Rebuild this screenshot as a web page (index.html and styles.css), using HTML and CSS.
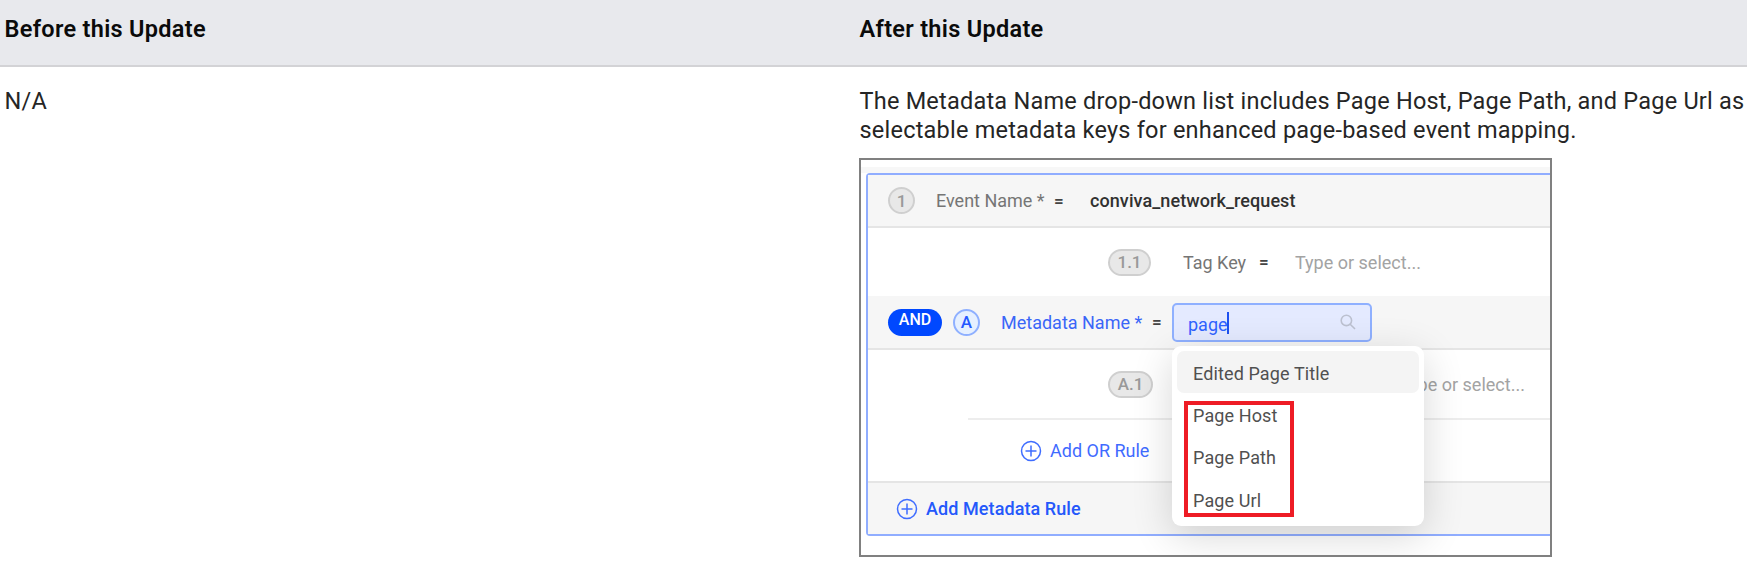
FILE: index.html
```html
<!DOCTYPE html>
<html lang="en">
<head>
  <meta charset="UTF-8" />
  <title>Metadata Name drop-down list</title>
  <meta name="viewport" content="width=device-width, initial-scale=1.0">
  <link rel="stylesheet" href="styles.css">
</head>
<body>
  <div class="table">
    <div class="table-head">
      <div class="cell"><span class="t">Before this Update</span></div>
      <div class="cell"><span class="t">After this Update</span></div>
    </div>
    <div class="table-row">
      <div class="cell"><p class="text">N/A</p></div>
      <div class="cell">
        <p class="text">The Metadata Name drop-down list includes Page Host, Page Path, and Page Url as<br>selectable metadata keys for enhanced page-based event mapping.</p>

        <div class="figure">
          <div class="strip"></div>
          <div class="rules">
            <div class="rule event">
              <span class="badge round">1</span>
              <span class="label event-label">Event Name *</span>
              <span class="equals">=</span>
              <span class="value">conviva_network_request</span>
            </div>

            <div class="rule tag">
              <span class="badge wide">1.1</span>
              <span class="label tag-label">Tag Key</span>
              <span class="equals">=</span>
              <span class="placeholder">Type or select...</span>
            </div>

            <div class="rule metadata">
              <span class="and">AND</span>
              <span class="badge round blue">A</span>
              <span class="label meta-label">Metadata Name *</span>
              <span class="equals">=</span>
              <div class="select">
                <span class="typed">page</span><span class="caret"></span>
                <svg class="search" width="16" height="16" viewBox="0 0 16 16" fill="none" stroke="#bcc1d0" stroke-width="1.6">
                  <circle cx="6.4" cy="6.4" r="5.2" />
                  <path d="M10.2 10.2L15 15" />
                </svg>
                <div class="menu">
                  <div class="option active">Edited Page Title</div>
                  <div class="option">Page Host</div>
                  <div class="option">Page Path</div>
                  <div class="option">Page Url</div>
                  <div class="highlight"></div>
                </div>
              </div>
            </div>

            <div class="rule tag-a">
              <span class="badge wide a1">A.1</span>
              <span class="placeholder">Type or select...</span>
            </div>

            <div class="rule add-or">
              <svg class="plus" width="22" height="22" viewBox="0 0 22 22" fill="none" stroke="#3f6dff" stroke-width="1.5">
                <circle cx="11" cy="11" r="9.5" />
                <path d="M11 5.5V16.5M5.5 11H16.5" />
              </svg>
              <span class="add-text">Add OR Rule</span>
            </div>

            <div class="rule add-meta">
              <svg class="plus" width="22" height="22" viewBox="0 0 22 22" fill="none" stroke="#3f6dff" stroke-width="1.5">
                <circle cx="11" cy="11" r="9.5" />
                <path d="M11 5.5V16.5M5.5 11H16.5" />
              </svg>
              <span class="add-text bold">Add Metadata Rule</span>
            </div>
          </div>
        </div>
      </div>
    </div>
  </div>
</body>
</html>
```

FILE: styles.css
```css
* {
  box-sizing: border-box;
}

body {
  margin: 0;
  background-color: #ffffff;
  font-family: Roboto, "Liberation Sans", sans-serif;
  color: #252525;
  overflow: hidden;
}

.table-head,
.table-row {
  display: grid;
  grid-template-columns: 855px 1fr;
}

.table-head {
  height: 67px;
  background-color: #e8e9ed;
  border-bottom: 2px solid #d3d3d6;
  font-size: 23.5px;
  font-weight: 600;
  line-height: 29px;
  letter-spacing: 0.3px;
  color: #0b0b0b;
}

.cell {
  padding-left: 4px;
  white-space: nowrap;
}

.table-head .cell {
  padding-top: 15px;
}

.table-row .cell {
  padding-top: 20px;
}

.text {
  margin: 0;
  font-size: 23.5px;
  line-height: 29px;
  letter-spacing: 0.22px;
}

.cell .t,
.cell .text {
  padding-left: 0.5px;
}

.figure {
  width: 693px;
  height: 399px;
  margin-top: 13px;
  border: 2px solid #808080;
  padding: 7px 0 0;
  overflow: hidden;
}

.strip {
  height: 6px;
  background-color: #f7f7f7;
}

.rules {
  margin-left: 5px;
  height: 363px;
  border: 2px solid #90adff;
  border-right: none;
  border-radius: 4px 0 0 4px;
}

.rule {
  display: flex;
  align-items: center;
  font-size: 18px;
}

.event,
.metadata,
.add-meta {
  background-color: #f6f6f6;
}

.event {
  height: 53px;
  padding-left: 20px;
  border-bottom: 2px solid #e5e5e5;
}

.tag {
  height: 68px;
  padding-left: 240px;
}

.metadata {
  height: 54px;
  padding-left: 20px;
  border-bottom: 2px solid #e5e5e5;
}

.tag-a {
  height: 70px;
  margin-left: 100px;
  padding-left: 140px;
  border-bottom: 2px solid #ededed;
}

.add-or {
  height: 63px;
  padding-left: 152px;
  border-bottom: 2px solid #e5e5e5;
}

.add-meta {
  height: 51px;
  padding-left: 28px;
}

.badge {
  display: flex;
  align-items: center;
  justify-content: center;
  height: 27px;
  border: 2px solid #cfcfcf;
  border-radius: 14px;
  background-color: #e8e8e8;
  color: #999999;
  font-size: 17px;
  font-weight: 500;
}

.round {
  width: 27px;
}

.wide {
  width: 43px;
}

.a1 {
  width: 45px;
}

.blue {
  margin-left: 11px;
  border-color: #8fb0ff;
  background-color: #e6f0ff;
  color: #2558ff;
}

.and {
  width: 54px;
  height: 27px;
  border-radius: 14px;
  background-color: #0048ff;
  color: #ffffff;
  font-size: 16px;
  font-weight: 500;
  line-height: 22px;
  text-align: center;
}

.label {
  color: #757575;
}

.event-label {
  width: 118px;
  margin-left: 21px;
}

.tag-label {
  width: 76px;
  margin-left: 32px;
}

.meta-label {
  width: 151px;
  margin-left: 21px;
  color: #3a66f8;
}

.equals {
  width: 10px;
  color: #444444;
  font-size: 17px;
  font-weight: 600;
}

.value {
  margin-left: 26px;
  color: #303030;
  font-weight: 500;
  letter-spacing: 0.08px;
}

.placeholder {
  margin-left: 26px;
  color: #a3a3a3;
}

.tag-a .placeholder {
  margin-left: 246px;
}

.select {
  position: relative;
  display: flex;
  align-items: center;
  width: 200px;
  height: 39px;
  margin-left: 10px;
  padding-left: 14px;
  border: 2px solid #8fb0ff;
  border-radius: 5px;
  background-color: #e4eaff;
}

.typed {
  padding-top: 5px;
  color: #2f62ff;
}

.caret {
  width: 2px;
  height: 22px;
  margin-top: 2px;
  margin-left: -1px;
  background-color: #1e50f0;
}

.search {
  margin-left: auto;
  margin-right: 14px;
}

.menu {
  position: absolute;
  top: 41px;
  left: -2px;
  z-index: 1;
  width: 252px;
  height: 180px;
  padding: 5px;
  border-radius: 9px;
  background-color: #ffffff;
  box-shadow: 0 10px 40px rgba(0, 0, 0, 0.16);
}

.option {
  height: 42.4px;
  padding-left: 16px;
  border-radius: 7px;
  color: #505050;
  line-height: 46px;
  letter-spacing: 0.12px;
}

.active {
  background-color: #f4f4f4;
}

/* red frame around the page options */
.highlight {
  position: absolute;
  top: 55px;
  left: 12px;
  width: 110px;
  height: 116px;
  border: 4px solid #ee1c25;
}

.add-text {
  margin-left: 8px;
  color: #3f6bff;
}

.bold {
  color: #2458fb;
  font-weight: 500;
  letter-spacing: 0.08px;
}
```
